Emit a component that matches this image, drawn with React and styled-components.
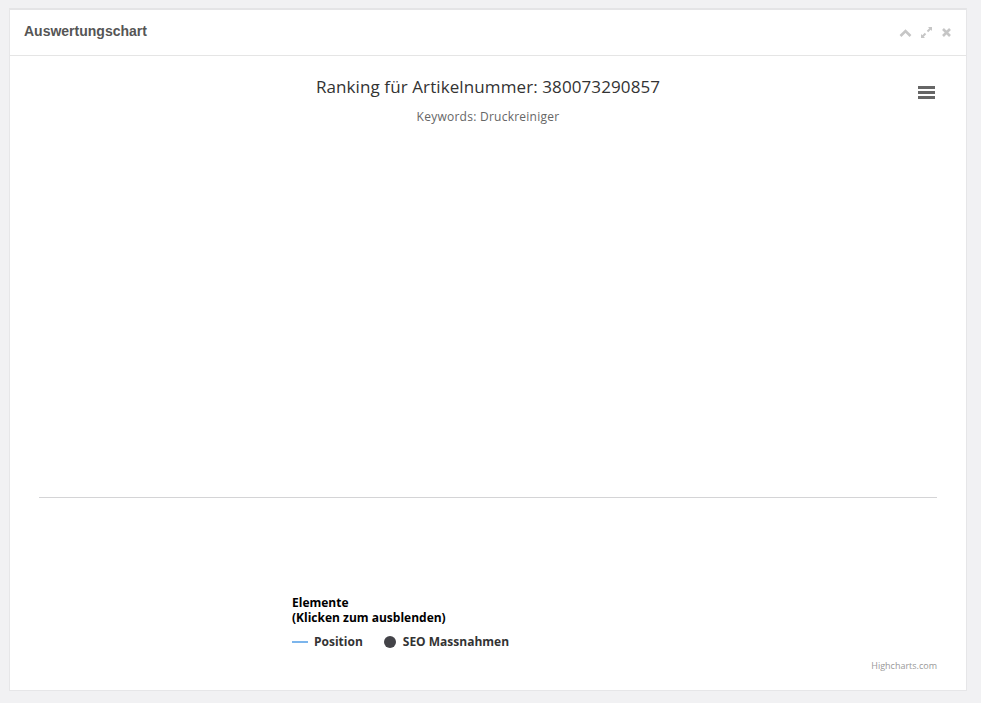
import React from "react";
import styled, { createGlobalStyle } from "styled-components";

const Global = createGlobalStyle`
  html, body { margin: 0; padding: 0; background: #f1f1f3; }
  body { font-family: "Liberation Sans", Arial, sans-serif; }
`;

const Page = styled.div`
  width: 981px;
  height: 703px;
  padding: 8px 14px 12px 9px;
  box-sizing: border-box;
`;

const Panel = styled.div`
  background: #fff;
  border: 1px solid #e6e6e8;
  border-top: 2px solid #e4e4e6;
  box-sizing: border-box;
  height: 683px;
  display: flex;
  flex-direction: column;
`;

const Header = styled.div`
  height: 46px;
  box-sizing: border-box;
  border-bottom: 1px solid #e5e5e5;
  display: flex;
  align-items: center;
  justify-content: space-between;
  padding: 0 14px 3px 14px;
  flex-shrink: 0;
`;

const HeaderTitle = styled.h2`
  margin: 0;
  font-size: 14px;
  font-weight: bold;
  color: #555;
  font-family: "Liberation Sans", Arial, sans-serif;
`;

const Tools = styled.div`
  display: flex;
  align-items: center;
  gap: 8px;
  color: #c6c6c6;
  margin-top: 3px;
`;

const ChartBody = styled.div`
  position: relative;
  flex: 1;
  display: flex;
  flex-direction: column;
  font-family: "Open Sans", "DejaVu Sans", sans-serif;
  padding-top: 20px;
`;

const ChartTitle = styled.div`
  text-align: center;
  font-size: 17px;
  line-height: 22px;
  color: #333;
  letter-spacing: 0.1px;
`;

const ChartSubtitle = styled.div`
  text-align: center;
  font-size: 12px;
  line-height: 16px;
  color: #666;
  margin-top: 11px;
  letter-spacing: 0.25px;
`;

const PlotArea = styled.div`
  height: 372px;
  margin: 0 29px;
  border-bottom: 1px solid #d4d4d6;
`;

const Legend = styled.div`
  margin: 97px 0 0 282px;
  font-size: 12px;
  font-weight: bold;
  color: #000;
`;

const LegendTitle = styled.div`
  line-height: 16px;
  & + & {
    margin-top: -1px;
  }
`;

const LegendItems = styled.div`
  display: flex;
  align-items: center;
  gap: 21px;
  margin-top: 8px;
  color: #333;
`;

const LegendItem = styled.div`
  display: flex;
  align-items: center;
  gap: 6px;
  line-height: 16px;
`;

const LineSymbol = styled.span`
  width: 16px;
  height: 2px;
  background: #7cb5ec;
  display: inline-block;
`;

const DotSymbol = styled.span`
  width: 12px;
  height: 12px;
  border-radius: 50%;
  background: #434348;
  display: inline-block;
  margin-right: 1px;
`;

const Credits = styled.div`
  align-self: flex-end;
  margin: 9px 29px 0 0;
  font-size: 9px;
  color: #999;
`;

const MenuButton = styled.div`
  position: absolute;
  top: 30px;
  right: 31px;
  width: 17px;
  display: flex;
  flex-direction: column;
  gap: 2px;
`;

const MenuBar = styled.span`
  height: 3px;
  background: #666;
  display: block;
`;

export default function App() {
  return (
    <>
      <Global />
      <Page>
        <Panel>
          <Header>
            <HeaderTitle>Auswertungschart</HeaderTitle>
            <Tools>
              <svg width="13" height="10" viewBox="0 0 13 10">
                <path d="M1.5 8 L6.5 3 L11.5 8" fill="none" stroke="currentColor" strokeWidth="2.6" />
              </svg>
              <svg width="13" height="13" viewBox="0 0 13 13">
                <path d="M7.5 5.5 L11 2" stroke="currentColor" strokeWidth="2" />
                <path d="M8 1 H12 V5 Z" fill="currentColor" />
                <path d="M5.5 7.5 L2 11" stroke="currentColor" strokeWidth="2" />
                <path d="M1 8 V12 H5 Z" fill="currentColor" />
              </svg>
              <svg width="11" height="11" viewBox="0 0 11 11">
                <path d="M2 2 L9 9 M9 2 L2 9" stroke="currentColor" strokeWidth="2.6" />
              </svg>
            </Tools>
          </Header>
          <ChartBody>
            <ChartTitle>Ranking für Artikelnummer: 380073290857</ChartTitle>
            <ChartSubtitle>Keywords: Druckreiniger</ChartSubtitle>
            <PlotArea />
            <Legend>
              <LegendTitle>Elemente</LegendTitle>
              <LegendTitle>(Klicken zum ausblenden)</LegendTitle>
              <LegendItems>
                <LegendItem>
                  <LineSymbol />
                  Position
                </LegendItem>
                <LegendItem>
                  <DotSymbol />
                  SEO Massnahmen
                </LegendItem>
              </LegendItems>
            </Legend>
            <Credits>Highcharts.com</Credits>
            <MenuButton>
              <MenuBar />
              <MenuBar />
              <MenuBar />
            </MenuButton>
          </ChartBody>
        </Panel>
      </Page>
    </>
  );
}
